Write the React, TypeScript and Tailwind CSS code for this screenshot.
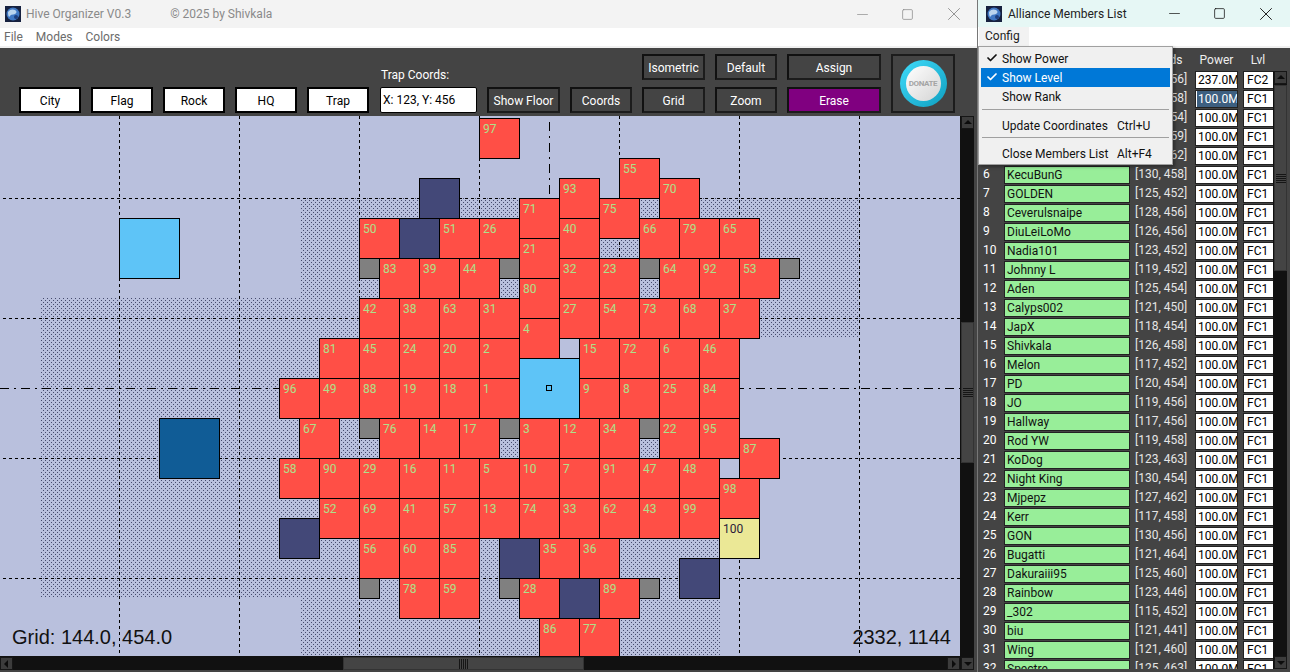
import { Check, Minus, Square, X } from 'lucide-react'

const UI_FONT = 'font-[Roboto,sans-serif]'

// number, left edge, grouped by top edge (page coordinates)
const CITY_ROWS: [number, [number, number][]][] = [
    [118, [[97, 479]]],
    [158, [[55, 619]]],
    [178, [[93, 559], [70, 659]]],
    [198, [[71, 519], [75, 599]]],
    [218, [[50, 359], [51, 439], [26, 479], [40, 559], [66, 639], [79, 679], [65, 719]]],
    [238, [[21, 519]]],
    [258, [[83, 379], [39, 419], [44, 459], [32, 559], [23, 599], [64, 659], [92, 699], [53, 739]]],
    [278, [[80, 519]]],
    [298, [[42, 359], [38, 399], [63, 439], [31, 479], [27, 559], [54, 599], [73, 639], [68, 679], [37, 719]]],
    [318, [[4, 519]]],
    [338, [[81, 319], [45, 359], [24, 399], [20, 439], [2, 479], [15, 579], [72, 619], [6, 659], [46, 699]]],
    [378, [[96, 279], [49, 319], [88, 359], [19, 399], [18, 439], [1, 479], [9, 579], [8, 619], [25, 659], [84, 699]]],
    [418, [[67, 299], [76, 379], [14, 419], [17, 459], [3, 519], [12, 559], [34, 599], [22, 659], [95, 699]]],
    [438, [[87, 739]]],
    [458, [[58, 279], [90, 319], [29, 359], [16, 399], [11, 439], [5, 479], [10, 519], [7, 559], [91, 599], [47, 639], [48, 679]]],
    [478, [[98, 719]]],
    [498, [[52, 319], [69, 359], [41, 399], [57, 439], [13, 479], [74, 519], [33, 559], [62, 599], [43, 639], [99, 679]]],
    [538, [[56, 359], [60, 399], [85, 439], [35, 539], [36, 579]]],
    [578, [[78, 399], [59, 439], [28, 519], [89, 599]]],
    [618, [[86, 539], [77, 579]]],
]

const ROCKS = [[419, 178], [399, 218], [279, 518], [499, 538], [679, 558], [559, 578]]
const TRAPS = [[359, 258], [499, 258], [639, 258], [779, 258], [359, 418], [499, 418], [639, 418], [359, 578], [499, 578], [639, 578]]

const MEMBERS: [string, string][] = [
    ['Vagabond', '[121, 456]'], ['Sunny', '[127, 458]'], ['Orion', '[124, 454]'], ['Tanker', '[128, 459]'], ['Reaper', '[118, 462]'],
    ['KecuBunG', '[130, 458]'], ['GOLDEN', '[125, 452]'], ['Ceverulsnaipe', '[128, 456]'], ['DiuLeiLoMo', '[126, 456]'], ['Nadia101', '[123, 452]'],
    ['Johnny L', '[119, 452]'], ['Aden', '[125, 454]'], ['Calyps002', '[121, 450]'], ['JapX', '[118, 454]'], ['Shivkala', '[126, 458]'],
    ['Melon', '[117, 452]'], ['PD', '[120, 454]'], ['JO', '[119, 456]'], ['Hallway', '[117, 456]'], ['Rod YW', '[119, 458]'],
    ['KoDog', '[123, 463]'], ['Night King', '[130, 454]'], ['Mjpepz', '[127, 462]'], ['Kerr', '[117, 458]'], ['GON', '[130, 456]'],
    ['Bugatti', '[121, 464]'], ['Dakuraiii95', '[125, 460]'], ['Rainbow', '[123, 446]'], ['_302', '[115, 452]'], ['biu', '[121, 441]'],
    ['Wing', '[121, 460]'], ['Spectre', '[125, 463]'],
]

function AppIcon() {
    return (
        <svg width="16" height="16" viewBox="0 0 16 16" className="shrink-0">
            <rect width="16" height="16" fill="#16213f" />
            <circle cx="8" cy="8" r="6.5" fill="#3f78c4" />
            <path d="M3 6c2-3 5-3 7-2s2 3 0 4-4 0-5 2-2 0-2-4z" fill="#b9d4ee" />
            <circle cx="11" cy="11" r="2" fill="#1d3f80" />
        </svg>
    )
}

function WindowButtons({ active }: { active?: boolean }) {
    const color = active ? 'text-[#111]' : 'text-[#8c8c8c]'
    return (
        <div className={`flex items-center ${color}`}>
            <Minus size={17} strokeWidth={1} />
            <Square size={13} strokeWidth={1.4} className="ml-[30px]" />
            <X size={22} strokeWidth={1} className="ml-[29px]" />
        </div>
    )
}

function Arrow({ dir }: { dir: 'up' | 'down' | 'left' | 'right' }) {
    const points = {
        up: '1,6 9,6 5,2',
        down: '1,3 9,3 5,7',
        left: '6,1 6,9 2,5',
        right: '3,1 3,9 7,5',
    }[dir]
    return (
        <div className="w-[13px] h-[13px] shrink-0 bg-[#3c3c3c] border border-[#161616] flex items-center justify-center">
            <svg width="10" height="10" viewBox="0 0 10 10">
                <polygon points={points} fill="#0c0c0c" />
            </svg>
        </div>
    )
}

function Grip({ vertical }: { vertical?: boolean }) {
    return (
        <div className={`flex ${vertical ? 'flex-col' : ''} gap-[1px] opacity-90`}>
            {[0, 1, 2, 3, 4].map(i => (
                <div key={i} className={vertical ? 'w-[10px] h-[1px] bg-[#111]' : 'w-[1px] h-[10px] bg-[#111]'} />
            ))}
        </div>
    )
}

function VScroll({ before, thumb }: { before: number; thumb: number }) {
    return (
        <div className="w-[14px] shrink-0 flex flex-col bg-[#111] pl-[1px]">
            <Arrow dir="up" />
            <div className="shrink-0" style={{ height: before }} />
            <div className="w-[13px] shrink-0 bg-[#444] border border-[#333] flex items-center justify-center" style={{ height: thumb }}>
                <Grip vertical />
            </div>
            <div className="flex-1" />
            <Arrow dir="down" />
        </div>
    )
}

function Tile({ x, y, size, color, children }: { x: number; y: number; size: number; color: string; children?: React.ReactNode }) {
    return (
        <div
            className={`absolute box-border border border-black ${color}`}
            style={{ left: x, top: y - 116, width: size + 1, height: size + 1 }}
        >
            {children}
        </div>
    )
}

function CityTile({ n, x, y, color = 'bg-[#ff4f46]', text = 'text-[#aee08a]' }: { n: number; x: number; y: number; color?: string; text?: string }) {
    return (
        <Tile x={x} y={y} size={40} color={color}>
            <span className={`absolute left-[3px] top-[3px] text-[12px] leading-[14px] ${text}`}>{n}</span>
        </Tile>
    )
}

function MapCanvas() {
    return (
        <div className={`relative flex-1 overflow-hidden bg-[#b9c0dd] ${UI_FONT}`}>
            <svg width="960" height="540" className="absolute left-0 top-0" shapeRendering="crispEdges">
                <defs>
                    <pattern id="floor" width="4" height="4" patternUnits="userSpaceOnUse">
                        <rect x="1" y="0" width="1" height="1" fill="#454a6c" />
                        <rect x="3" y="2" width="1" height="1" fill="#454a6c" />
                    </pattern>
                </defs>
                <rect x="40" y="182" width="320" height="300" fill="url(#floor)" />
                <rect x="300" y="82" width="560" height="140" fill="url(#floor)" />
                <rect x="300" y="302" width="420" height="238" fill="url(#floor)" />
                {[119, 239, 359, 479, 619, 739, 859].map(x => (
                    <line key={x} x1={x + 0.5} y1="0" x2={x + 0.5} y2="540" stroke="#000" strokeDasharray="3 3" />
                ))}
                {[82, 202, 342, 462].map(y => (
                    <line key={y} x1="3" y1={y + 0.5} x2="960" y2={y + 0.5} stroke="#000" strokeDasharray="3 3" />
                ))}
                <line x1="0" y1="272.5" x2="960" y2="272.5" stroke="#000" strokeDasharray="9 5 2 5" />
                <line x1="549.5" y1="6" x2="549.5" y2="540" stroke="#000" strokeDasharray="9 5 2 5" />
            </svg>

            {ROCKS.map(([x, y]) => (
                <Tile key={`${x}-${y}`} x={x} y={y} size={40} color="bg-[#434878]" />
            ))}
            {TRAPS.map(([x, y]) => (
                <Tile key={`${x}-${y}`} x={x} y={y} size={20} color="bg-[#808080]" />
            ))}
            <Tile x={119} y={218} size={60} color="bg-[#5ec4f7]" />
            <Tile x={159} y={418} size={60} color="bg-[#105c96]" />
            <Tile x={519} y={358} size={60} color="bg-[#5ec4f7]">
                <div className="absolute left-[26px] top-[26px] w-[6px] h-[6px] border border-black" />
            </Tile>
            {CITY_ROWS.map(([y, row]) => row.map(([n, x]) => <CityTile key={n} n={n} x={x} y={y} />))}
            <CityTile n={100} x={719} y={518} color="bg-[#ebe896]" text="text-[#2a1a3a]" />

            <div className='absolute left-[12px] top-[509px] text-[20px] leading-[24px] text-[#111] font-["Liberation_Sans",sans-serif]'>Grid: 144.0, 454.0</div>
            <div className='absolute right-[9px] top-[509px] text-[20px] leading-[24px] text-[#111] font-["Liberation_Sans",sans-serif]'>2332, 1144</div>
        </div>
    )
}

function LightButton({ label }: { label: string }) {
    return (
        <div className="w-[62px] h-[26px] pt-[1px] box-border border-2 border-black bg-white flex items-center justify-center text-[12px] text-black">
            {label}
        </div>
    )
}

function DarkButton({ label, className = '' }: { label: string; className?: string }) {
    return (
        <div className={`h-[26px] pt-[1px] box-border border-2 border-t-[#111] border-l-[#111] border-r-[#1c1c1c] border-b-[#1c1c1c] flex items-center justify-center text-[12px] text-white ${className}`}>
            {label}
        </div>
    )
}

function Toolbar() {
    return (
        <div className={`h-[68px] shrink-0 bg-[#444] flex items-end pl-[19px] pb-[3px] ${UI_FONT}`}>
            <div className="flex gap-[10px]">
                {['City', 'Flag', 'Rock', 'HQ', 'Trap'].map(l => <LightButton key={l} label={l} />)}
            </div>
            <div className="ml-[11px] w-[97px] flex flex-col">
                <div className="text-[12px] leading-[16px] text-white pl-[1px] mb-[4px]">Trap Coords:</div>
                <div className="h-[26px] box-border border border-black bg-white text-[12px] leading-[25px] text-black pl-[2px] rounded-[2px]">X: 123, Y: 456</div>
            </div>
            <DarkButton label="Show Floor" className="ml-[10px] w-[73px]" />
            <DarkButton label="Coords" className="ml-[10px] w-[62px]" />
            <div className="ml-[10px] grid grid-cols-[63px_62px_94px] grid-rows-[26px_26px] gap-x-[10px] gap-y-[7px]">
                <DarkButton label="Isometric" />
                <DarkButton label="Default" />
                <DarkButton label="Assign" />
                <DarkButton label="Grid" />
                <DarkButton label="Zoom" />
                <DarkButton label="Erase" className="bg-[#800080]" />
            </div>
            <div className="ml-[10px] w-[64px] h-[59px] box-border border-2 border-[#1c1c1c] flex items-center justify-center">
                <div className="w-[47px] h-[47px] rounded-full bg-gradient-to-br from-[#3fdcfb] to-[#0a9fc0] flex items-center justify-center">
                    <div className="w-[35px] h-[35px] rounded-full bg-gradient-to-br from-white to-[#d4d4d4] flex items-center justify-center text-[8px] font-bold tracking-tighter text-[#a4a4a4]">
                        DONATE
                    </div>
                </div>
            </div>
        </div>
    )
}

function MainWindow() {
    return (
        <div className="w-[977px] shrink-0 h-full flex flex-col bg-[#444]">
            <div className={`h-[28px] shrink-0 bg-[#f3f3f3] flex items-center pl-[5px] pr-[12px] text-[12px] text-[#8a8a8a] ${UI_FONT}`}>
                <AppIcon />
                <span className="ml-[5px]">Hive Organizer V0.3</span>
                <span className="ml-[39px]">© 2025 by Shivkala</span>
                <div className="flex-1" />
                <WindowButtons />
            </div>
            <div className={`h-[18px] shrink-0 bg-white flex items-center gap-[13px] pl-[4px] text-[12px] text-[#6b6b6b] ${UI_FONT}`}>
                <span>File</span>
                <span>Modes</span>
                <span>Colors</span>
            </div>
            <div className="h-[2px] shrink-0 bg-[#f0f0f0]" />
            <Toolbar />
            <div className="flex-1 flex min-h-0">
                <div className="w-[960px] flex flex-col">
                    <MapCanvas />
                    <div className="h-[14px] shrink-0 flex bg-[#111] pt-[1px]">
                        <Arrow dir="left" />
                        <div className="w-[330px]" />
                        <div className="w-[241px] h-[13px] bg-[#444] border border-[#333] flex items-center justify-center">
                            <Grip />
                        </div>
                        <div className="flex-1" />
                        <Arrow dir="right" />
                    </div>
                </div>
                <VScroll before={193} thumb={141} />
                <div className="w-[3px] bg-[#444]" />
            </div>
            <div className="h-[2px] shrink-0 bg-[#444]" />
        </div>
    )
}

function MemberRow({ index, name, coords }: { index: number; name: string; coords: string }) {
    const first = index === 0
    const focused = index === 1
    return (
        <div className="h-[19px] shrink-0 flex text-[12px] leading-[16px]">
            <div className="w-[26px] shrink-0 pl-[5px] text-white">{index + 1}</div>
            <div className="w-[126px] shrink-0 h-[18px] box-border border border-[#222] bg-[#98ee99] pl-[2px] text-[#111]">{name}</div>
            <div className="w-[65px] shrink-0 pl-[5px] text-[#e6e6e6] whitespace-nowrap overflow-hidden">{coords}</div>
            <div className="w-[43px] shrink-0 h-[18px] box-border border border-[#222] bg-white pl-[2px] text-black overflow-hidden whitespace-nowrap">
                {focused ? <span className="block -mx-[1px] px-[1px] bg-[#3d5f80] text-white">100.0M</span> : first ? '237.0M' : '100.0M'}
            </div>
            <div className="w-[30px] shrink-0 ml-[5px] h-[18px] box-border border border-[#222] border-r-0 bg-white pl-[3px] text-black">
                {first ? 'FC2' : 'FC1'}
            </div>
        </div>
    )
}

function ConfigMenu() {
    const item = 'h-[19px] flex items-center pl-[21px] pr-2 relative'
    return (
        <div className="absolute left-0 top-[46px] w-[195px] h-[119px] box-border border border-[#a0a0a0] bg-[#f0f0f0] p-[2px] text-[12px] text-[#111] shadow-[2px_2px_3px_rgba(0,0,0,0.35)]">
            <div className={item}>
                <Check size={12} strokeWidth={3.5} className="absolute left-[5px] top-[3px]" />
                Show Power
            </div>
            <div className={`${item} bg-[#0078d7] text-white`}>
                <Check size={12} strokeWidth={3.5} className="absolute left-[5px] top-[3px]" />
                Show Level
            </div>
            <div className={item}>Show Rank</div>
            <div className="h-[1px] bg-[#a0a0a0] mx-[1px] mt-[3px] mb-[6px]" />
            <div className={`${item} justify-between`}>
                <span>Update Coordinates</span>
                <span className="w-[45px]">Ctrl+U</span>
            </div>
            <div className="h-[1px] bg-[#a0a0a0] mx-[1px] mt-[2px] mb-[6px]" />
            <div className={`${item} justify-between`}>
                <span>Close Members List</span>
                <span className="w-[45px]">Alt+F4</span>
            </div>
        </div>
    )
}

function MembersWindow() {
    return (
        <div className={`relative flex-1 h-full flex flex-col bg-[#444] ${UI_FONT}`}>
            <div className="h-[27px] shrink-0 bg-[#e6f7f5] flex items-center pl-[8px] pr-[13px] text-[12px] text-[#222]">
                <AppIcon />
                <span className="ml-[6px]">Alliance Members List</span>
                <div className="flex-1" />
                <WindowButtons active />
            </div>
            <div className="h-[19px] shrink-0 bg-white text-[12px] text-[#222] flex">
                <div className="ml-[1px] w-[50px] bg-[#f2f2f2] pl-[6px] leading-[19px]">Config</div>
            </div>
            <div className="h-[2px] shrink-0 bg-[#f0f0f0]" />
            <div className="flex-1 min-h-0 flex">
                <div className="flex-1 min-w-0 overflow-hidden flex flex-col">
                    <div className="h-[23px] shrink-0 flex text-[12px] leading-[24px] text-[#eee] pl-[152px]">
                        <div className="w-[65px] pl-[14px]">Coords</div>
                        <div className="w-[43px] text-center">Power</div>
                        <div className="w-[35px] text-center pl-[5px]">Lvl</div>
                    </div>
                    {MEMBERS.map(([name, coords], i) => (
                        <MemberRow key={name} index={i} name={name} coords={coords} />
                    ))}
                </div>
                <div className="pt-[23px] h-[621px] flex">
                    <VScroll before={1} thumb={186} />
                </div>
                <div className="w-[3px]" />
            </div>
            <div className="h-[3px] shrink-0 bg-[#444]" />
            <ConfigMenu />
        </div>
    )
}

export default function App() {
    return (
        <div className="w-[1290px] h-[672px] overflow-hidden flex bg-[#444]">
            <MainWindow />
            <div className="w-[1px] shrink-0 bg-[#777]" />
            <MembersWindow />
        </div>
    )
}
